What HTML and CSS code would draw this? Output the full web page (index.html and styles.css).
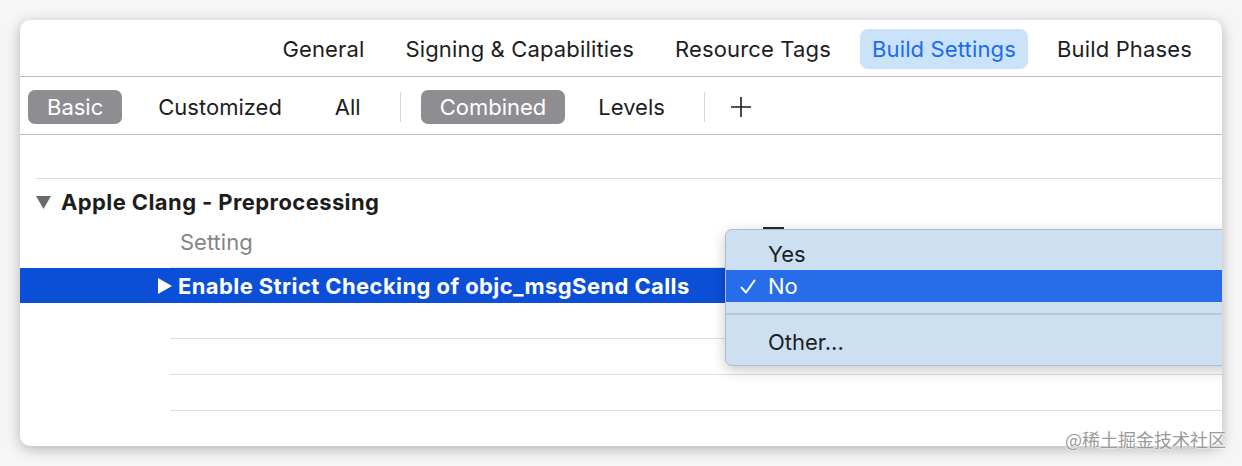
FILE: index.html
```html
<!DOCTYPE html>
<html>
<head>
<meta charset="utf-8">
<link rel="stylesheet" href="styles.css">
</head>
<body>
<div class="page">
  <div class="window">
    <nav class="tabs">
      <span class="tab">General</span>
      <span class="tab">Signing &amp; Capabilities</span>
      <span class="tab">Resource Tags</span>
      <span class="tab active">Build Settings</span>
      <span class="tab">Build Phases</span>
    </nav>
    <div class="toolbar">
      <span class="seg pill">Basic</span>
      <span class="seg">Customized</span>
      <span class="seg seg-all">All</span>
      <span class="vsep"></span>
      <span class="seg pill">Combined</span>
      <span class="seg seg-levels">Levels</span>
      <span class="vsep"></span>
      <span class="plus"><svg width="22" height="22" viewBox="0 0 22 22"><path d="M11 1V21M1 11H21" stroke="#1d1d1d" stroke-width="1.6" fill="none"/></svg></span>
    </div>
    <div class="content">
      <div class="divider"></div>
      <div class="group">
        <svg class="tri" width="15" height="13" viewBox="0 0 15 13"><polygon points="0,0 15,0 7.5,13" fill="#6b6b6b"/></svg>
        <span>Apple Clang - Preprocessing</span>
      </div>
      <div class="colhead">Setting</div>
      <div class="row selected">
        <svg class="tri" width="14" height="16" viewBox="0 0 14 16"><polygon points="0,0 14,8 0,16" fill="#ffffff"/></svg>
        <span>Enable Strict Checking of objc_msgSend Calls</span>
      </div>
      <div class="row"></div>
      <div class="row"></div>
      <div class="row"></div>
    </div>
    <div class="stub"></div>
    <div class="menu">
      <div class="mi"><span class="check"></span><span>Yes</span></div>
      <div class="mi hl"><span class="check"><svg width="16" height="15" viewBox="0 0 16 15"><path d="M1.5 8.5L6 13.5L14.5 1.5" stroke="#ffffff" stroke-width="2" fill="none" stroke-linecap="round" stroke-linejoin="round"/></svg></span><span>No</span></div>
      <div class="msep"></div>
      <div class="mi"><span class="check"></span><span>Other...</span></div>
    </div>
  </div>
  <div class="watermark">@稀土掘金技术社区</div>
</div>
</body>
</html>
```
FILE: styles.css
```css
* { box-sizing: border-box; }
body {
  margin: 0;
  background: #f6f6f6;
  font-family: Inter, "Noto Sans", sans-serif;
  color: #1d1d1d;
}
.page {
  position: relative;
  width: 1242px;
  height: 466px;
  padding: 20px;
}
.window {
  position: relative;
  width: 1202px;
  height: 426px;
  background: #ffffff;
  border-radius: 10px;
  box-shadow: 0 3px 14px rgba(0, 0, 0, 0.28);
  overflow: hidden;
}
.tabs {
  height: 57px;
  display: flex;
  justify-content: flex-end;
  align-items: center;
  gap: 17px;
  padding: 2px 18px 0 0;
  border-bottom: 1px solid #bcbcbc;
  font-size: 22px;
  letter-spacing: 0.15px;
}
.tab {
  height: 40px;
  line-height: 40px;
  padding: 0 12px;
  border-radius: 8px;
  white-space: nowrap;
}
.tab.active {
  background: #cbe2fb;
  color: #1c6cec;
}
.toolbar {
  height: 58px;
  display: flex;
  align-items: center;
  gap: 17px;
  padding: 2px 0 0 8px;
  border-bottom: 1px solid #bcbcbc;
  font-size: 22px;
}
.seg {
  height: 34px;
  line-height: 34px;
  padding: 0 19px;
  border-radius: 7px;
  white-space: nowrap;
}
.seg-all { margin-left: -2px; }
.seg-levels { margin-left: -3px; }
.seg.pill {
  background: #8e8e92;
  color: #ffffff;
}
.vsep {
  width: 1px;
  height: 30px;
  margin: 0 3px;
  background: #d6d6d6;
}
.plus {
  display: flex;
  margin-left: 5px;
}
.content {
  padding-top: 43px;
}
.divider {
  margin-left: 16px;
  height: 1px;
  background: #dcdcdc;
}
.group {
  height: 46px;
  display: flex;
  align-items: center;
  gap: 10px;
  padding-left: 16px;
  font-size: 22px;
  font-weight: 700;
  letter-spacing: 0.4px;
}
.colhead {
  height: 43px;
  padding: 0 0 9px 160px;
  display: flex;
  align-items: center;
  font-size: 22px;
  color: #858585;
  background: linear-gradient(#e4e4e4, #e4e4e4) no-repeat 150px 100% / calc(100% - 150px) 1px;
}
.row {
  height: 36px;
  background: linear-gradient(#e0e0e0, #e0e0e0) no-repeat 150px 100% / calc(100% - 150px) 1px;
}
.row.selected {
  height: 35px;
  display: flex;
  align-items: center;
  gap: 6px;
  padding-left: 138px;
  background: #0b4fd7;
  color: #ffffff;
  font-size: 22px;
  font-weight: 700;
  letter-spacing: 0.4px;
  white-space: nowrap;
}
.stub {
  position: absolute;
  left: 743px;
  top: 207px;
  width: 21px;
  height: 3px;
  background: #2a2a2a;
}
.menu {
  position: absolute;
  left: 705px;
  top: 209px;
  right: -20px;
  height: 137px;
  padding: 8px 0 7px;
  background: #cde0f2;
  border: 1px solid #aebdca;
  border-radius: 7px;
  box-shadow: 0 4px 14px rgba(0, 0, 0, 0.22);
  font-size: 22px;
  color: #1c1f24;
}
.mi {
  height: 32px;
  display: flex;
  align-items: center;
  padding-left: 14px;
}
.mi.hl {
  background: #276ce8;
  color: #ffffff;
}
.check {
  width: 28px;
  display: flex;
  align-items: center;
}
.msep {
  height: 2px;
  margin: 11px 0;
  background: #b8c8d7;
}
.watermark {
  position: absolute;
  right: 16px;
  bottom: 14px;
  font-family: "Noto Sans CJK SC", "Noto Sans", sans-serif;
  font-size: 18px;
  color: #9a9a9a;
  text-shadow: 0 0 2px #ffffff, 0 0 2px #ffffff;
}
```
